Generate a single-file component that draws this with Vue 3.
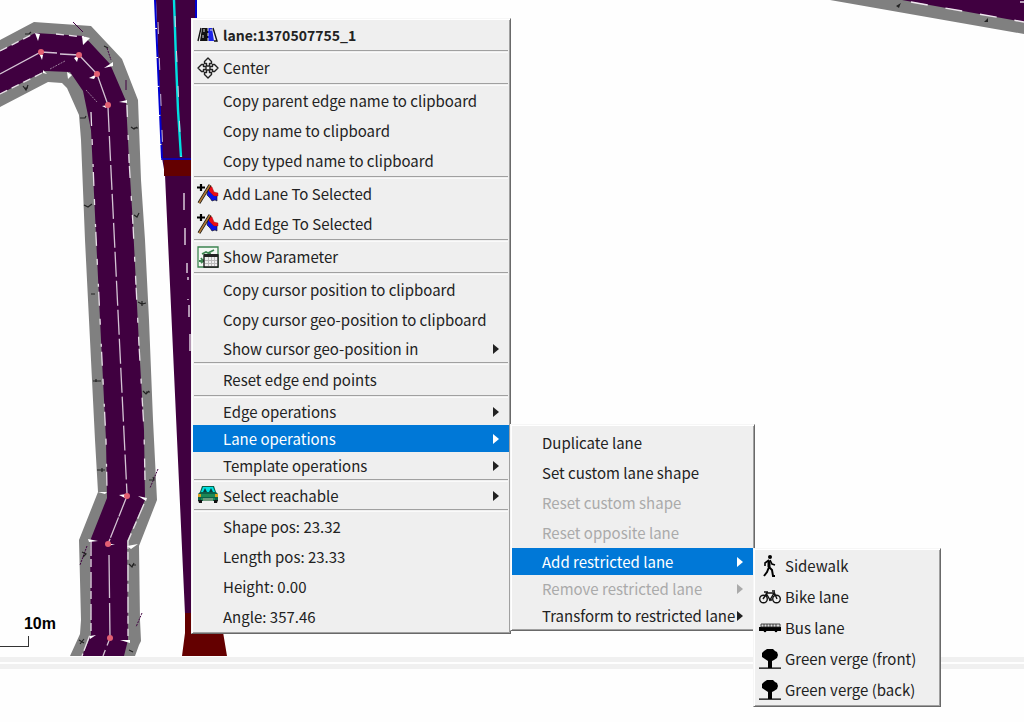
<template>
  <div class="editor">
    <div class="canvas">
      <svg class="roads" width="240" height="656" viewBox="0 0 240 656" aria-hidden="true">
        <path fill="#808080" d="M0 40 34 22 91 26 122 59 138 100 141 180 145 240 149 320 153 420 156 480 157 500 139 546 140 620 141 641 139 645 135 656H70L80 634 81 620 79 540 98 492 95 440 90 340 85 240 81 140 79 115 67 88 62 83 48 82 0 107Z" />
        <path fill="#400040" d="M0 51 35 33 84 36 110 64 126 101 129 160 133 225 139 345 144 430 145 500 127 541 128 640 124 656H82L91 635 90 541 107 498 106 440 101 340 95 215 91 130 83 91 70 72 45 71 0 94Z" />
        <g fill="none" stroke="#d4c4d4" stroke-width="1.3">
          <path d="M0 74 41 52 57 53M60 54 79 55 97 74 108 105" />
          <path stroke-dasharray="25 4" d="M108 107 110 150 127 494" />
          <path stroke-dasharray="22 1" d="M127 496 108 544" />
          <path stroke-dasharray="43 5" d="M109 555 110 638 103 656" />
        </g>
        <g fill="none" stroke="#e8e0e8" stroke-width="1.3">
          <path stroke-dasharray="14 13 6 19 3 5" d="M91 112 95 215 101 340 106 440 107 490" />
          <path stroke-dasharray="12 18 5 14 9 3" d="M127 105 129 160 133 225 139 345 144 430 145 480" />
          <path stroke-dasharray="16 3 8 5" d="M144 504 128 541 128 636M91 540 91 632 82 656" />
          <path stroke-dasharray="8 5" d="M0 51 35 33M56 34 84 37M0 94 42 73" />
        </g>
        <g fill="#fff">
          <path d="M35 33 40 34 38 41ZM82 36 90 38 83 45ZM104 68 113 62 113 66ZM119 102 127 100 127 103ZM43 70 47 74 43 73ZM67 72 72 75 68 79ZM74 58 79 55 77 62ZM89 78 97 74 94 79ZM102 106 108 105 106 108ZM39 53 43 55 42 60Z" />
          <path d="M138 496 147 498 146 501ZM98 492 107 492 105 494ZM119 495 127 494 125 498ZM88 539 98 541 89 542ZM127 546 138 544 131 549ZM108 544 115 544 108 546ZM120 640 130 640 130 643ZM90 636 96 635 90 639Z" />
        </g>
        <g fill="none" stroke="#400040" stroke-width="1">
          <path d="M73 22 83 32M126 80V90" />
          <path stroke-dasharray="2 1" d="M107 48 111 60M158 469 150 488M87 546 80 565M142 613 136 627" />
        </g>
        <path fill="none" stroke="#9a7c9a" stroke-dasharray="2 1" d="M50 69 65 61M86 90 97 102" />
        <g fill="none" stroke="#222" stroke-width="1.2">
          <path d="M25 34H29L31 32M23 86 26 90 28 85M24 88H28M104 46 108 48M80 118H85L86 116M131 127 134 129 137 127M134 128H138M84 205 88 207 92 204M134 215 137 217 139 213M91 294H95M138 302 142 304 146 303M142 301V306M93 381H101M96 379V382M143 391 146 394 149 391M146 392H150M97 470H105M102 468V472M149 480H154L153 477M82 552 86 554 83 557M129 564 132 567 134 563M132 565H136M79 640 84 643M80 644 84 639M129 650 133 652" />
        </g>
        <g fill="#e25f72">
          <circle v-for="node in nodes" :key="node.join()" :cx="node[0]" :cy="node[1]" r="3" />
        </g>

        <path fill="#400040" d="M156 0H197V160L230 614H185L165 175 162 158Z" />
        <path fill="#640000" d="M164 160H200V176H164ZM185 613H223V632L227 656H182L185 633Z" />
        <path fill="none" stroke="#0000d0" stroke-width="2" stroke-dasharray="28 1" d="M155 0 162 158M196 0V18" />
        <path fill="none" stroke="#c8b8d8" stroke-dasharray="12 24" d="M158 22 163 158" />
        <path fill="none" stroke="#0000d0" stroke-width="1.5" d="M161 159H192" />
        <path fill="none" stroke="#00dfe0" stroke-width="2.4" d="M174 0 176 60 178 110 181 157" />
        <path fill="none" stroke="#d4d0e0" stroke-width="1" stroke-dasharray="11 24" d="M175 16 181 157" />
        <path fill="none" stroke="#d8c8d8" stroke-width="1.5" d="M184 193V210M185 228V245M187 263V273M188 277V280M188 299V300M189 305V317M190 334V351" />
      </svg>
      <svg class="roads" width="204" height="60" viewBox="0 0 204 60" aria-hidden="true">
        <path fill="#808080" d="M10 0H204V34Z" />
        <path fill="#400040" d="M82 0H204V22Z" />
        <path fill="none" stroke="#eee6ee" stroke-width="1.4" stroke-dasharray="17 18" d="M91 2 204 22" />
        <path fill="none" stroke="#eee6ee" stroke-width="1.4" d="M200 2H204" />
        <path fill="#222" d="M76 6 81 3 80 5 79 8ZM164 22 168 18V22Z" />
      </svg>
      <div class="scale">
        <span>10m</span>
        <i></i>
      </div>
    </div>
    <div class="status"></div>

    <ul
      v-for="menu in menus"
      :key="menu.name"
      class="menu"
      :class="menu.name"
      :aria-label="menu.label"
    >
      <li v-for="(item, index) in menu.items" :key="index" :class="{ line: item.line }">
        <button
          v-if="!item.line"
          type="button"
          class="item"
          :class="{ title: item.title, cascade: item.sub, open: item.text === open[menu.name] }"
          :disabled="item.disabled"
          @click="select(menu, item)"
        >
          <svg class="icon" width="22" height="22" viewBox="0 0 22 22" aria-hidden="true">
            <g v-if="item.icon === 'lane'">
              <path fill="#111" d="M5 4H11V17H3Z" />
              <path fill="#1c24e8" d="M11 4H15L17 17H11Z" />
              <path fill="none" stroke="#111" stroke-width="1.400" d="M4 4 1 17M16 4 20 17H17" />
              <path fill="none" stroke="#ddd" d="M7 5V8M6 11V14M11 4V7M11 9V12M11 14V17M14 5V7" />
            </g>
            <g v-else-if="item.icon === 'center'" fill="#efefef" stroke="#222" stroke-width="1.400" stroke-linejoin="round">
              <path d="M11 1 14.500 4.500V6.500H12.500V9H9.500V6.500H7.500V4.500Z" />
              <path d="M11 21 7.500 17.500V15.500H9.500V13H12.500V15.500H14.500V17.500Z" />
              <path d="M1 11 4.500 7.500H6.500V9.500H9V12.500H6.500V14.500H4.500Z" />
              <path d="M21 11 17.500 14.500H15.500V12.500H13V9.500H15.500V7.500H17.500Z" />
            </g>
            <g v-else-if="item.icon === 'flag'">
              <path fill="none" stroke="#000" stroke-width="2.200" d="M4 1V8M0 4.500H8" />
              <path fill="#0b10e8" stroke="#111" stroke-width=".6" d="M11 5 10 12 13 15 15 18 18 17 20 18 20 11 16 10Z" />
              <path fill="#ec0a16" stroke="#811" stroke-width=".4" d="M12 2 15 4 17 9 21 10 21 13 17 13 14 10 12 8Z" />
              <path fill="none" stroke="#111" stroke-width="3.200" d="M2 20 13 2" />
              <path fill="none" stroke="#b07a38" stroke-width="1.600" d="M2 20 13 2" />
            </g>
            <g v-else-if="item.icon === 'table'">
              <path fill="#f4f8f4" stroke="#3d8450" stroke-width="1.300" d="M1 1H21V21H1Z" />
              <path fill="none" stroke="#3d8450" stroke-width="1.800" d="M2 15H6L4 12M4 17 7 14M5 8 9 6 11 7 17 4M7 9 14 8" />
              <path fill="#eee" stroke="#111" stroke-width="1.300" d="M7 9H21V21H7Z" />
              <path fill="#222" d="M7 8H21V11H7Z" />
              <path fill="none" stroke="#bbb" d="M8 14.500H20M8 17.500H20M11.500 11V20M14.500 11V20M17.500 11V20" />
            </g>
            <g v-else-if="item.icon === 'car'">
              <path fill="#0b6048" d="M5 1H17L19 7 21 9V16H1V9L3 7Z" />
              <path fill="#00e0e0" d="M6 2H16L18 7H4Z" />
              <path fill="#083c38" d="M6 7 8 3 10 7ZM12 7 14 3 16 7Z" />
              <path fill="#1c8856" d="M2 9H20V12H2ZM4 13H18V15H4Z" />
              <path fill="#d6a21c" d="M1 9H4V12H1ZM18 9H21V12H18Z" />
              <path fill="#6d9a7c" d="M6 13H16V16H6Z" />
              <path fill="#111" d="M1 15H5V18H2ZM17 15H21L20 18H17Z" />
            </g>
            <g v-else-if="item.icon === 'walk'">
              <circle cx="11" cy="2" r="2" />
              <path fill="none" stroke="#000" stroke-width="3" d="M10 6 10 12" />
              <path fill="none" stroke="#000" stroke-width="1.600" d="M10 5 6 8V11M11 5 13 9 16 10" />
              <path fill="none" stroke="#000" stroke-width="2" d="M10 12 8 17 5 21M10 12 13 15 14 21H16" />
            </g>
            <g v-else-if="item.icon === 'bike'" fill="none" stroke="#111" stroke-width="1.400">
              <circle cx="4.500" cy="13" r="3.800" />
              <circle cx="17.500" cy="13" r="3.800" />
              <path d="M4 13 8 7H15L11 14 7 7M15 6 18 13M5 6H9M13 5H16M10 14H13" />
            </g>
            <g v-else-if="item.icon === 'bus'">
              <path d="M0 10H22V14H0Z" />
              <path fill="#ddd" stroke="#222" stroke-width=".8" d="M2 7H21V10H2ZM5 7V10M8 7V10M11 7V10M14 7V10M17 7V10" />
              <circle cx="6" cy="14" r="1.300" />
              <circle cx="17" cy="14" r="1.300" />
            </g>
            <g v-else-if="item.icon === 'tree'">
              <path d="M8 1H14L16 3 18 4 19 7 18 10 15 12 13 13V19.500H22V20.700H0V19.500H9V13L6 11 3 9 3 5 5 3Z" />
            </g>
          </svg>
          <span class="text">{{ item.text }}</span>
          <svg v-if="item.sub" class="arrow" width="6" height="10" viewBox="0 0 6 10" aria-hidden="true">
            <path fill="currentColor" d="M0 0 6 5 0 10Z" />
          </svg>
        </button>
      </li>
    </ul>
  </div>
</template>

<script setup>
import { ref } from 'vue'

const nodes = [[41, 52], [79, 55], [97, 74], [108, 105], [127, 496], [108, 544], [110, 638]]

const line = { line: true }

const menus = [
  {
    name: 'main',
    label: 'Lane',
    items: [
      { text: 'lane:1370507755_1', icon: 'lane', title: true },
      line,
      { text: 'Center', icon: 'center' },
      line,
      { text: 'Copy parent edge name to clipboard' },
      { text: 'Copy name to clipboard' },
      { text: 'Copy typed name to clipboard' },
      line,
      { text: 'Add Lane To Selected', icon: 'flag' },
      { text: 'Add Edge To Selected', icon: 'flag' },
      line,
      { text: 'Show Parameter', icon: 'table' },
      line,
      { text: 'Copy cursor position to clipboard' },
      { text: 'Copy cursor geo-position to clipboard' },
      { text: 'Show cursor geo-position in', sub: true },
      line,
      { text: 'Reset edge end points' },
      line,
      { text: 'Edge operations', sub: true },
      { text: 'Lane operations', sub: true },
      { text: 'Template operations', sub: true },
      line,
      { text: 'Select reachable', icon: 'car', sub: true },
      line,
      { text: 'Shape pos: 23.32' },
      { text: 'Length pos: 23.33' },
      { text: 'Height: 0.00' },
      { text: 'Angle: 357.46' }
    ]
  },
  {
    name: 'operations',
    label: 'Lane operations',
    items: [
      { text: 'Duplicate lane' },
      { text: 'Set custom lane shape' },
      { text: 'Reset custom shape', disabled: true },
      { text: 'Reset opposite lane', disabled: true },
      { text: 'Add restricted lane', sub: true },
      { text: 'Remove restricted lane', sub: true, disabled: true },
      { text: 'Transform to restricted lane', sub: true }
    ]
  },
  {
    name: 'restricted',
    label: 'Add restricted lane',
    items: [
      { text: 'Sidewalk', icon: 'walk' },
      { text: 'Bike lane', icon: 'bike' },
      { text: 'Bus lane', icon: 'bus' },
      { text: 'Green verge (front)', icon: 'tree' },
      { text: 'Green verge (back)', icon: 'tree' }
    ]
  }
]

const open = ref({ main: 'Lane operations', operations: 'Add restricted lane' })

const select = (menu, item) => {
  if (item.sub) open.value[menu.name] = item.text
}
</script>

<style>
body {
  margin: 0;
  background: #fefefe;
}
</style>

<style scoped>
.editor {
  position: relative;
  min-height: 100vh;
  overflow: hidden;
  font-family: "Noto Sans CJK JP", "Noto Sans", sans-serif;
  font-size: 15px;
  color: #222;
}
.canvas {
  position: relative;
  display: flex;
  justify-content: space-between;
  align-items: flex-start;
}
.roads {
  display: block;
}
.scale {
  position: absolute;
  left: 0;
  bottom: 9px;
  width: 56px;
  font-family: "Liberation Sans", Arial, sans-serif;
  font-size: 16px;
  font-weight: bold;
  line-height: 24px;
  color: #000;
  text-align: right;
}
.scale i {
  display: block;
  width: 28px;
  height: 10px;
  border: solid #333;
  border-width: 0 1px 1px 0;
}
.status {
  height: 2px;
  margin-top: 1px;
  border: solid #f0f0f0;
  border-width: 5px 0;
}
.menu {
  position: absolute;
  box-sizing: border-box;
  margin: 0;
  padding: 1px;
  list-style: none;
  background: #efefef;
  border: 1px solid;
  border-color: #f6f6f6 #696969 #696969 #f6f6f6;
  box-shadow: inset 1px 1px #fff, inset -1px -1px #a0a0a0;
}
.main {
  left: 191px;
  top: 18px;
  width: 320px;
}
.operations {
  left: 510px;
  top: 424px;
  width: 245px;
  padding-top: 3px;
}
.restricted {
  left: 753px;
  top: 548px;
  width: 188px;
}
.item {
  display: flex;
  align-items: center;
  width: 100%;
  height: 30px;
  padding: 0 10px 0 4px;
  border: none;
  background: transparent;
  color: inherit;
  font: inherit;
  line-height: 24px;
  white-space: nowrap;
  text-align: left;
}
.restricted .item {
  height: 31px;
}
.item.cascade {
  height: 27px;
}
.item.title {
  font-size: 14px;
  font-weight: bold;
}
.item.open {
  background: #0078d7;
  color: #fff;
}
.item:disabled {
  color: #aaa;
}
.icon {
  flex: none;
  margin-right: 4px;
}
.text {
  flex: 1;
}
.line {
  box-sizing: border-box;
  height: 3px;
  margin: 0 1px;
  border-top: 1px solid #a0a0a0;
  border-bottom: 1px solid #fafafa;
}
</style>
